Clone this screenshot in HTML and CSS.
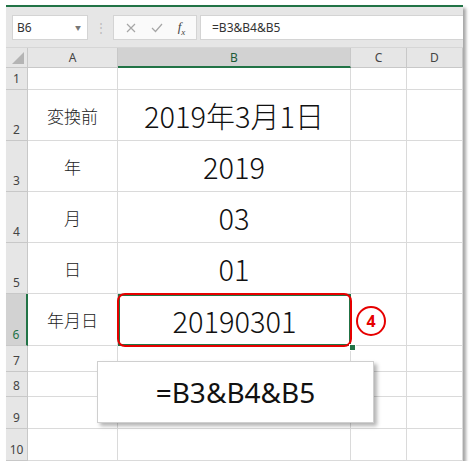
FILE: index.html
```html
<!DOCTYPE html>
<html>

<head>
	<title>Excel B6</title>
	<link rel="stylesheet" href="styles.css">
</head>

<body>
	<div class="window">
		<div class="toolbar">
			<div class="namebox">B6<span class="drop">&#9660;</span></div>
			<div class="sep">&#8942;</div>
			<div class="fxbox">
				<svg width="12" height="12" viewBox="0 0 12 12"><path d="M2 2 L10 10 M10 2 L2 10" stroke="#a6a6a6" stroke-width="1.2" fill="none"/></svg>
				<svg width="14" height="12" viewBox="0 0 14 12"><path d="M2 6 L5.5 9.5 L12 2" stroke="#a6a6a6" stroke-width="1.2" fill="none"/></svg>
				<span class="fx">f<sub>x</sub></span>
			</div>
			<div class="formula">=B3&amp;B4&amp;B5</div>
		</div>

		<div class="sheet">
			<div class="hd corner"><span class="tri"></span></div>
			<div class="hd col">A</div>
			<div class="hd col sel">B</div>
			<div class="hd col">C</div>
			<div class="hd col">D</div>

			<div class="hd row">1</div>
			<div class="cell"></div><div class="cell"></div><div class="cell"></div><div class="cell"></div>

			<div class="hd row">2</div>
			<div class="cell label">変換前</div><div class="cell big">2019年3月1日</div><div class="cell"></div><div class="cell"></div>

			<div class="hd row">3</div>
			<div class="cell label">年</div><div class="cell big">2019</div><div class="cell"></div><div class="cell"></div>

			<div class="hd row">4</div>
			<div class="cell label">月</div><div class="cell big">03</div><div class="cell"></div><div class="cell"></div>

			<div class="hd row">5</div>
			<div class="cell label">日</div><div class="cell big">01</div><div class="cell"></div><div class="cell"></div>

			<div class="hd row sel">6</div>
			<div class="cell label">年月日</div><div class="cell big active">20190301</div><div class="cell"></div><div class="cell"></div>

			<div class="hd row">7</div>
			<div class="cell"></div><div class="cell"></div><div class="cell"></div><div class="cell"></div>

			<div class="hd row">8</div>
			<div class="cell"></div><div class="cell"></div><div class="cell"></div><div class="cell"></div>

			<div class="hd row">9</div>
			<div class="cell"></div><div class="cell"></div><div class="cell"></div><div class="cell"></div>

			<div class="hd row">10</div>
			<div class="cell"></div><div class="cell"></div><div class="cell"></div><div class="cell"></div>
		</div>

		<div class="redbox"></div>
		<div class="handle"></div>
		<div class="badge">4</div>
		<div class="popup">=B3&amp;B4&amp;B5</div>
	</div>
</body>

</html>
```

FILE: styles.css
```css
body {
	margin: 0;
	background-color: white;
	font-family: 'Noto Sans', 'Noto Sans CJK JP', sans-serif;
}

.window {
	position: relative;
	margin: 5px 0 0 6px;
	width: 457px;
	height: 454px;
	border-top: 2px solid #217346;
	background-color: white;
	box-shadow: 3px 3px 3px rgba(0, 0, 0, 0.35);
}

.toolbar {
	display: flex;
	align-items: flex-start;
	height: 41px;
	padding: 8px 0 0 6px;
	box-sizing: border-box;
	background-color: #e6e6e6;
	border-bottom: 1px solid #d6d6d6;
}

.namebox {
	display: flex;
	align-items: center;
	justify-content: space-between;
	width: 76px;
	height: 25px;
	box-sizing: border-box;
	padding: 0 6px 0 4px;
	background-color: white;
	border: 1px solid #d4d4d4;
	font-size: 12px;
	color: #333;
}

.drop {
	font-size: 6px;
	color: #777;
}

.sep {
	width: 25px;
	height: 25px;
	line-height: 25px;
	text-align: center;
	font-size: 12px;
	color: #bbb;
}

.fxbox {
	display: flex;
	align-items: center;
	justify-content: space-around;
	width: 84px;
	height: 25px;
	box-sizing: border-box;
	padding: 0 4px;
	background-color: #fafafa;
	border: 1px solid #d4d4d4;
}

.fx {
	font-family: 'Liberation Serif', serif;
	font-style: italic;
	font-size: 13px;
	color: #444;
}

.fx sub {
	font-size: 9px;
}

.formula {
	flex: 1;
	height: 25px;
	line-height: 23px;
	margin-left: 3px;
	box-sizing: border-box;
	padding-left: 11px;
	background-color: white;
	border: 1px solid #d4d4d4;
	border-right: 0;
	font-size: 12px;
	color: #333;
}

.sheet {
	display: grid;
	grid-template-columns: 22px 90px 233px 56px 56px;
	grid-template-rows: 20px 22px 51px 51px 51px 51px 52px 26px 25px 32px 32px;
}

.hd {
	background-color: #e6e6e6;
	color: #444;
	box-sizing: border-box;
	border-right: 1px solid #c8c8c8;
	border-bottom: 1px solid #c8c8c8;
}

.corner {
	position: relative;
}

.tri {
	position: absolute;
	right: 3px;
	bottom: 3px;
	width: 0;
	height: 0;
	border-left: 12px solid transparent;
	border-bottom: 12px solid #b4b4b4;
}

.col {
	font-size: 12px;
	text-align: center;
	line-height: 19px;
}

.col.sel {
	background-color: #d2d2d2;
	border-bottom: 2px solid #217346;
	color: #1d5a37;
}

.row {
	display: flex;
	align-items: flex-end;
	justify-content: center;
	padding-bottom: 2px;
	font-size: 12px;
}

.row.sel {
	background-color: #d2d2d2;
	border-right: 2px solid #217346;
	color: #217346;
}

.cell {
	display: flex;
	align-items: center;
	justify-content: center;
	box-sizing: border-box;
	border-right: 1px solid #dadada;
	border-bottom: 1px solid #dadada;
	font-family: 'Noto Sans CJK JP', sans-serif;
	font-weight: 300;
	color: #222;
}

.label {
	font-size: 17px;
}

.big {
	font-size: 29px;
	color: #111;
}

.active {
	border: 2px solid #217346;
}

.redbox {
	position: absolute;
	left: 111px;
	top: 286px;
	width: 235px;
	height: 54px;
	box-sizing: border-box;
	border: 2px solid #e60000;
	border-radius: 8px;
}

.handle {
	position: absolute;
	left: 343px;
	top: 337px;
	width: 5px;
	height: 5px;
	background-color: #217346;
	border: 1px solid white;
}

.badge {
	position: absolute;
	left: 350px;
	top: 299px;
	width: 30px;
	height: 30px;
	box-sizing: border-box;
	border: 2px solid #e60000;
	border-radius: 50%;
	text-align: center;
	line-height: 26px;
	font-size: 16px;
	font-weight: bold;
	color: #e60000;
}

.popup {
	position: absolute;
	left: 91px;
	top: 354px;
	width: 277px;
	height: 62px;
	box-sizing: border-box;
	background-color: white;
	border: 1px solid #cfcfcf;
	box-shadow: 3px 3px 4px rgba(0, 0, 0, 0.3);
	text-align: center;
	line-height: 60px;
	font-size: 28px;
	color: #111;
}
```
